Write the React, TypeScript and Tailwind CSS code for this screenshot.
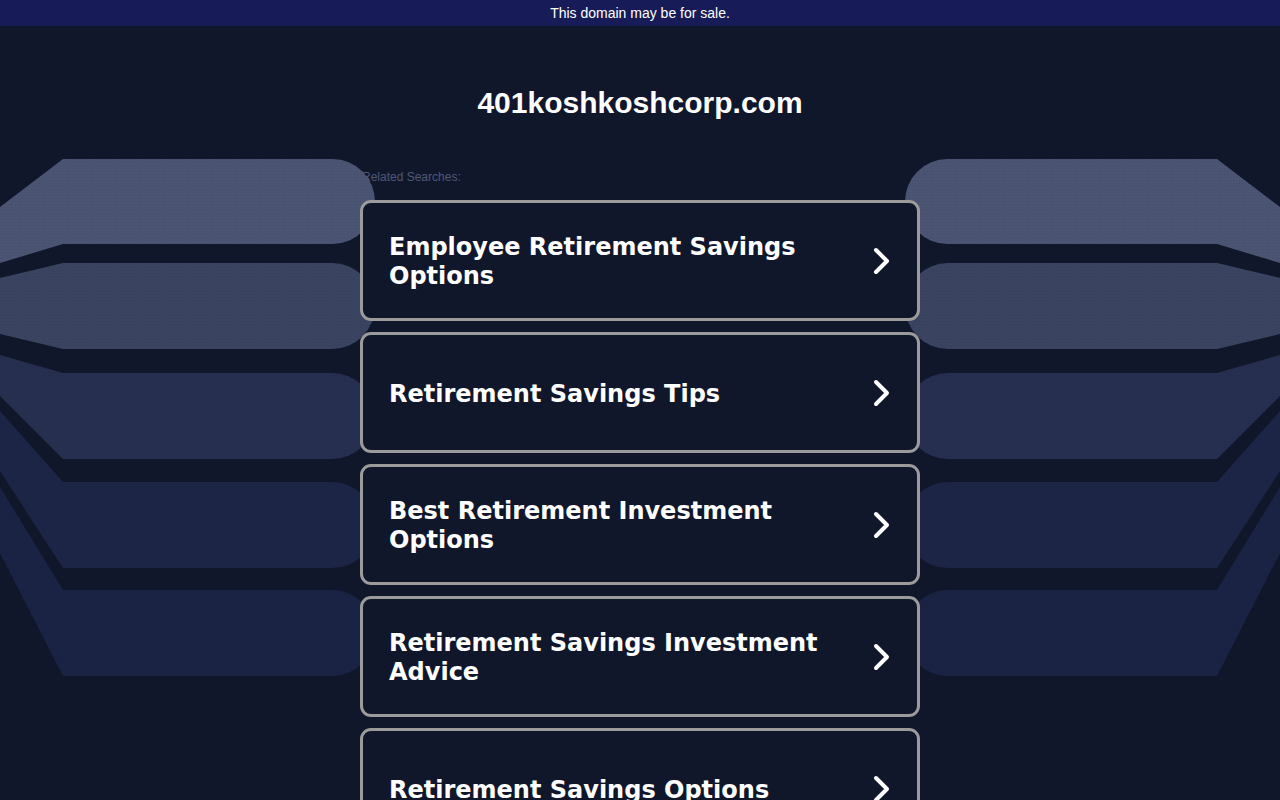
import React from "react";

const searches = [
  "Employee Retirement Savings Options",
  "Retirement Savings Tips",
  "Best Retirement Investment Options",
  "Retirement Savings Investment Advice",
  "Retirement Savings Options",
];

// background bands: flat top/bottom, and where the slanted ends meet the page edge
const bands = [
  { t: 159, b: 244, t0: 207, b0: 263, fill: "#4b5573" },
  { t: 263, b: 349, t0: 278, b0: 334, fill: "#3a4461" },
  { t: 373, b: 459, t0: 355, b0: 396, fill: "#262f4f" },
  { t: 482, b: 568, t0: 411, b0: 471, fill: "#1c2546" },
  { t: 590, b: 676, t0: 487, b0: 553, fill: "#1a2344" },
];

function bandPath(t: number, b: number, t0: number, b0: number, side: "l" | "r") {
  const r = (b - t) / 2;
  if (side === "l") {
    const e = 375 - r;
    return `M0 ${t0} L63 ${t} L${e} ${t} A${r} ${r} 0 0 1 ${e} ${b} L63 ${b} L0 ${b0} Z`;
  }
  const s = 905 + r;
  return `M1280 ${t0} L1217 ${t} L${s} ${t} A${r} ${r} 0 0 0 ${s} ${b} L1217 ${b} L1280 ${b0} Z`;
}

function Backdrop() {
  return (
    <svg
      className="absolute left-1/2 top-0 -translate-x-1/2 z-[1] pointer-events-none"
      width="1280"
      height="800"
      viewBox="0 0 1280 800"
    >
      <defs>
        <pattern id="dots" width="3" height="3" patternUnits="userSpaceOnUse">
          <rect x="0" y="0" width="1" height="1" fill="#0d1226" opacity="0.12" />
        </pattern>
      </defs>
      {bands.map((bd, i) => (
        <g key={i}>
          <path d={bandPath(bd.t, bd.b, bd.t0, bd.b0, "l")} fill={bd.fill} />
          <path d={bandPath(bd.t, bd.b, bd.t0, bd.b0, "l")} fill="url(#dots)" />
          <path d={bandPath(bd.t, bd.b, bd.t0, bd.b0, "r")} fill={bd.fill} />
          <path d={bandPath(bd.t, bd.b, bd.t0, bd.b0, "r")} fill="url(#dots)" />
        </g>
      ))}
    </svg>
  );
}

function Chevron() {
  return (
    <svg width="20" height="28" viewBox="0 0 20 28" className="shrink-0">
      <polyline
        points="4,3 15,14 4,25"
        fill="none"
        stroke="#ffffff"
        strokeWidth="4"
        strokeLinecap="round"
        strokeLinejoin="round"
      />
    </svg>
  );
}

export default function App() {
  return (
    <div className="relative min-h-screen bg-[#11172b] overflow-hidden font-['Liberation_Sans',Arial,sans-serif]">
      {/* Sale banner */}
      <div className="h-[26px] bg-[#171c58] flex items-center justify-center text-[14px] text-white">
        This domain may be for sale.
      </div>

      <Backdrop />

      <main className="w-[560px] mx-auto pb-10">
        <h1 className="pt-[61px] text-center text-[30px] leading-[32px] font-bold text-white">
          401koshkoshcorp.com
        </h1>

        <p className="mt-[51px] pl-[2px] text-[12px] leading-[14px] text-[#4e5878]">
          Related Searches:
        </p>

        <div className="relative z-[2] mt-[16px] flex flex-col gap-[11px]">
          {searches.map((s) => (
            <a
              key={s}
              href="#"
              className="h-[121px] flex items-center justify-between gap-6 rounded-[11px] border-[3px] border-[#9b9b9b] bg-[#11172b] pl-[26px] pr-[25px]"
            >
              <span className="pt-[3px] font-['DejaVu_Sans',Verdana,sans-serif] font-bold text-[24px] leading-[29px] text-white max-w-[450px]">
                {s}
              </span>
              <Chevron />
            </a>
          ))}
        </div>
      </main>
    </div>
  );
}
